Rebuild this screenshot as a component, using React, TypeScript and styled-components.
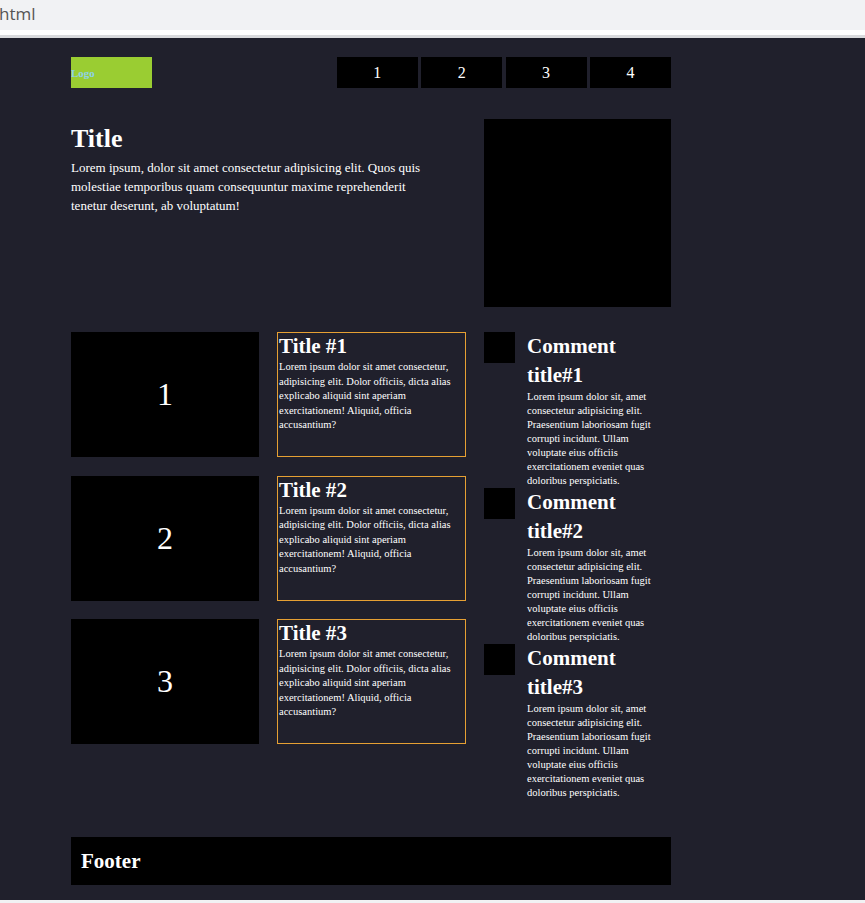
import React from "react";
import styled, { createGlobalStyle } from "styled-components";

const Global = createGlobalStyle`
  html, body { margin: 0; padding: 0; background: #f1f2f4; }
  body { font-family: "Liberation Serif", "Times New Roman", serif; }
  * { box-sizing: border-box; }
`;

const TopBar = styled.div`
  height: 30px;
  background: #f1f2f4;
  font-family: "Open Sans", "Noto Sans", sans-serif;
  font-size: 17px;
  color: #555;
  line-height: 28px;
  margin-left: -1px;
`;

const WhiteStrip = styled.div`
  height: 5px;
  background: #ffffff;
`;

const GreyStrip = styled.div`
  height: 3px;
  background: #d9dadd;
`;

const Page = styled.div`
  background: #20202c;
  padding: 19px 0 15px 71px;
  color: #fff;
`;

const Container = styled.div`
  width: 600px;
  display: flex;
  flex-direction: column;
`;

const Header = styled.header`
  display: flex;
  justify-content: space-between;
  align-items: stretch;
  height: 31px;
`;

const Logo = styled.div`
  width: 81px;
  background: #9acd32;
  color: #8ed2e6;
  font-size: 11px;
  font-weight: bold;
  display: flex;
  align-items: center;
`;

const Nav = styled.nav`
  display: flex;
  gap: 3.4px;
`;

const NavItem = styled.div`
  width: 81px;
  background: #000;
  color: #fff;
  font-size: 16px;
  display: flex;
  align-items: center;
  justify-content: center;
`;

const Hero = styled.section`
  margin-top: 31px;
  display: grid;
  grid-template-columns: 188px 189px 187px;
  column-gap: 18px;
  height: 188px;
`;

const HeroText = styled.div`
  grid-column: 1 / span 2;
  padding-right: 30px;
`;

const HeroTitle = styled.h1`
  margin: 0;
  font-size: 26px;
  line-height: 39px;
  font-weight: bold;
`;

const HeroPara = styled.p`
  margin: 0;
  font-size: 13px;
  line-height: 19px;
`;

const HeroImage = styled.div`
  background: #000;
`;

const Content = styled.section`
  margin-top: 25px;
  display: grid;
  grid-template-columns: 395px 187px;
  column-gap: 18px;
  align-items: start;
`;

const Cards = styled.div`
  display: grid;
  grid-template-columns: 188px 189px;
  grid-auto-rows: 125px;
  column-gap: 18px;
  row-gap: 18.5px;
`;

const CardImage = styled.div`
  background: #000;
  color: #fff;
  font-size: 32px;
  display: flex;
  align-items: center;
  justify-content: center;
`;

const CardBox = styled.div`
  border: 1px solid #e6a033;
  padding: 0 0 0 1px;
`;

const CardTitle = styled.h2`
  margin: 0;
  font-size: 21px;
  line-height: 27px;
  font-weight: bold;
`;

const CardText = styled.p`
  margin: 0;
  font-size: 10.5px;
  line-height: 14.5px;
`;

const Comments = styled.div`
  display: flex;
  flex-direction: column;
`;

const Comment = styled.div`
  display: flex;
  gap: 12px;
  height: 156px;
`;

const Thumb = styled.div`
  width: 31px;
  height: 31px;
  background: #000;
  flex: none;
`;

const CommentBody = styled.div`
  flex: 1;
  padding-right: 12px;
`;

const CommentTitle = styled.h3`
  margin: 0;
  font-size: 21px;
  line-height: 29px;
  font-weight: bold;
`;

const CommentText = styled.p`
  margin: 0;
  font-size: 10.5px;
  line-height: 14px;
`;

const Footer = styled.footer`
  margin-top: 37px;
  height: 48px;
  background: #000;
  display: flex;
  align-items: center;
  padding-left: 10px;
  font-size: 21px;
  font-weight: bold;
`;

const Bottom = styled.div`
  height: 3px;
  background: #f1f2f4;
`;

const cardText =
  "Lorem ipsum dolor sit amet consectetur, adipisicing elit. Dolor officiis, dicta alias explicabo aliquid sint aperiam exercitationem! Aliquid, officia accusantium?";
const commentText =
  "Lorem ipsum dolor sit, amet consectetur adipisicing elit. Praesentium laboriosam fugit corrupti incidunt. Ullam voluptate eius officiis exercitationem eveniet quas doloribus perspiciatis.";

export default function App() {
  const items = [1, 2, 3];
  return (
    <>
      <Global />
      <TopBar>html</TopBar>
      <WhiteStrip />
      <GreyStrip />
      <Page>
        <Container>
          <Header>
            <Logo>Logo</Logo>
            <Nav>
              {[1, 2, 3, 4].map((n) => (
                <NavItem key={n}>{n}</NavItem>
              ))}
            </Nav>
          </Header>
          <Hero>
            <HeroText>
              <HeroTitle>Title</HeroTitle>
              <HeroPara>
                Lorem ipsum, dolor sit amet consectetur adipisicing elit. Quos quis molestiae
                temporibus quam consequuntur maxime reprehenderit tenetur deserunt, ab voluptatum!
              </HeroPara>
            </HeroText>
            <HeroImage />
          </Hero>
          <Content>
            <Cards>
              {items.map((n) => (
                <React.Fragment key={n}>
                  <CardImage>{n}</CardImage>
                  <CardBox>
                    <CardTitle>Title #{n}</CardTitle>
                    <CardText>{cardText}</CardText>
                  </CardBox>
                </React.Fragment>
              ))}
            </Cards>
            <Comments>
              {items.map((n) => (
                <Comment key={n}>
                  <Thumb />
                  <CommentBody>
                    <CommentTitle>Comment title#{n}</CommentTitle>
                    <CommentText>{commentText}</CommentText>
                  </CommentBody>
                </Comment>
              ))}
            </Comments>
          </Content>
          <Footer>Footer</Footer>
        </Container>
      </Page>
      <Bottom />
    </>
  );
}
